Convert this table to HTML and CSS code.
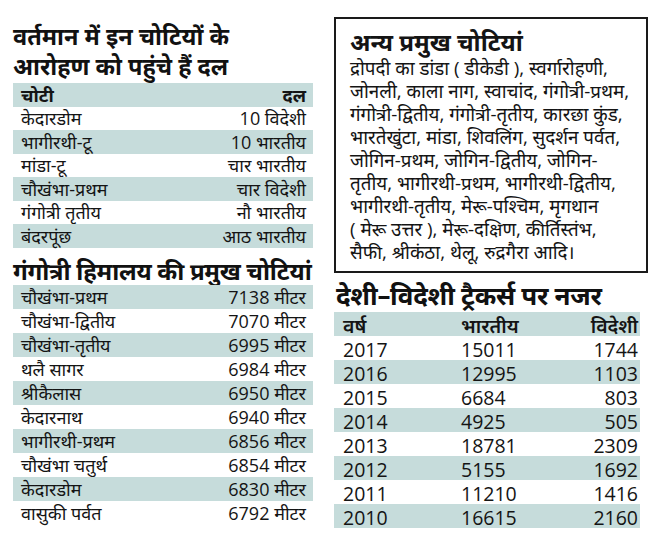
FILE: index.html
```html
<!DOCTYPE html>
<html lang="hi">
<head>
<meta charset="utf-8">
<link rel="stylesheet" href="styles.css">
</head>
<body>
<div class="page">
  <div class="left">
    <h1 class="title two">वर्तमान में इन चोटियों के<br>आरोहण को पहुंचे हैं दल</h1>
    <div class="table t1">
      <div class="row head"><span>चोटी</span><span>दल</span></div>
      <div class="row"><span>केदारडोम</span><span>10 विदेशी</span></div>
      <div class="row alt"><span>भागीरथी-टू</span><span>10 भारतीय</span></div>
      <div class="row"><span>मांडा-टू</span><span>चार भारतीय</span></div>
      <div class="row alt"><span>चौखंभा-प्रथम</span><span>चार विदेशी</span></div>
      <div class="row"><span>गंगोत्री तृतीय</span><span>नौ भारतीय</span></div>
      <div class="row alt"><span>बंदरपूंछ</span><span>आठ भारतीय</span></div>
    </div>
    <h1 class="title one">गंगोत्री हिमालय की प्रमुख चोटियां</h1>
    <div class="table t2">
      <div class="row alt"><span>चौखंभा-प्रथम</span><span>7138 मीटर</span></div>
      <div class="row"><span>चौखंभा-द्वितीय</span><span>7070 मीटर</span></div>
      <div class="row alt"><span>चौखंभा-तृतीय</span><span>6995 मीटर</span></div>
      <div class="row"><span>थलै सागर</span><span>6984 मीटर</span></div>
      <div class="row alt"><span>श्रीकैलास</span><span>6950 मीटर</span></div>
      <div class="row"><span>केदारनाथ</span><span>6940 मीटर</span></div>
      <div class="row alt"><span>भागीरथी-प्रथम</span><span>6856 मीटर</span></div>
      <div class="row"><span>चौखंभा चतुर्थ</span><span>6854 मीटर</span></div>
      <div class="row alt"><span>केदारडोम</span><span>6830 मीटर</span></div>
      <div class="row"><span>वासुकी पर्वत</span><span>6792 मीटर</span></div>
    </div>
  </div>
  <div class="right">
    <div class="box">
      <h2 class="box-title">अन्य प्रमुख चोटियां</h2>
      <p class="box-text">द्रोपदी का डांडा ( डीकेडी ), स्वर्गारोहणी,<br>जोनली, काला नाग, स्वाचांद, गंगोत्री-प्रथम,<br>गंगोत्री-द्वितीय, गंगोत्री-तृतीय, कारछा कुंड,<br>भारतेखुंटा, मांडा, शिवलिंग, सुदर्शन पर्वत,<br>जोगिन-प्रथम, जोगिन-द्वितीय, जोगिन-<br>तृतीय, भागीरथी-प्रथम, भागीरथी-द्वितीय,<br>भागीरथी-तृतीय, मेरू-पश्चिम, मृगथान<br>( मेरू उत्तर ), मेरू-दक्षिण, कीर्तिस्तंभ,<br>सैफी, श्रीकंठा, थेलू, रुद्रगैरा आदि।</p>
    </div>
    <h1 class="title one t3title">देशी–विदेशी ट्रैकर्स पर नजर</h1>
    <div class="table t3">
      <div class="row3 alt head"><span>वर्ष</span><span>भारतीय</span><span>विदेशी</span></div>
      <div class="row3"><span>2017</span><span>15011</span><span>1744</span></div>
      <div class="row3 alt"><span>2016</span><span>12995</span><span>1103</span></div>
      <div class="row3"><span>2015</span><span>6684</span><span>803</span></div>
      <div class="row3 alt"><span>2014</span><span>4925</span><span>505</span></div>
      <div class="row3"><span>2013</span><span>18781</span><span>2309</span></div>
      <div class="row3 alt"><span>2012</span><span>5155</span><span>1692</span></div>
      <div class="row3"><span>2011</span><span>11210</span><span>1416</span></div>
      <div class="row3 alt"><span>2010</span><span>16615</span><span>2160</span></div>
    </div>
  </div>
</div>
</body>
</html>
```
FILE: styles.css
```css
html, body {
  margin: 0;
  padding: 0;
  background: #ffffff;
}
body {
  width: 650px;
  height: 540px;
  overflow: hidden;
  color: #141414;
  font-family: "Open Sans", "Noto Sans", "Noto Sans Devanagari", sans-serif;
}
.page {
  display: flex;
  padding-left: 13px;
  gap: 21px;
}
.left {
  width: 300px;
  padding-top: 21px;
}
.right {
  width: 314px;
  padding-top: 17px;
}
.title {
  margin: 0;
  font-weight: 700;
  font-size: 24px;
  color: #111;
}
.title.two {
  font-size: 23.5px;
  line-height: 30px;
  margin-bottom: 2px;
}
.title.one {
  line-height: 28px;
  margin-top: 9px;
  margin-bottom: 0;
  letter-spacing: -0.3px;
}
.table {
  display: flex;
  flex-direction: column;
}
.row {
  display: flex;
  justify-content: space-between;
  align-items: center;
  height: 23.5px;
  padding: 0 7px 0 8px;
  font-size: 18px;
}
.t2 .row {
  height: 24px;
}
.alt {
  background: #c6dcdb;
}
.row.head {
  background: #c6dcdb;
  font-weight: 700;
}
.box {
  border: 2px solid #1a1a1a;
  height: 256px;
  padding: 9px 4px 0 14px;
  box-sizing: border-box;
}
.box-title {
  margin: 0 0 1px;
  font-size: 24px;
  font-weight: 700;
  line-height: 28px;
}
.box-text {
  margin: 0;
  font-size: 18.8px;
  line-height: 23px;
  white-space: nowrap;
  letter-spacing: 0;
}
.t3title {
  font-size: 26px;
  margin-top: 8px !important;
  margin-left: 2px;
}
.t3 {
  width: 306px;
  margin-top: 3px;
}
.row3 {
  display: grid;
  grid-template-columns: 118px 1fr 80px;
  align-items: center;
  height: 24px;
  padding: 0 2px 0 9px;
  font-size: 19.5px;
}
.row3 span:last-child {
  text-align: right;
}
.row3.head {
  font-weight: 600;
}
```
